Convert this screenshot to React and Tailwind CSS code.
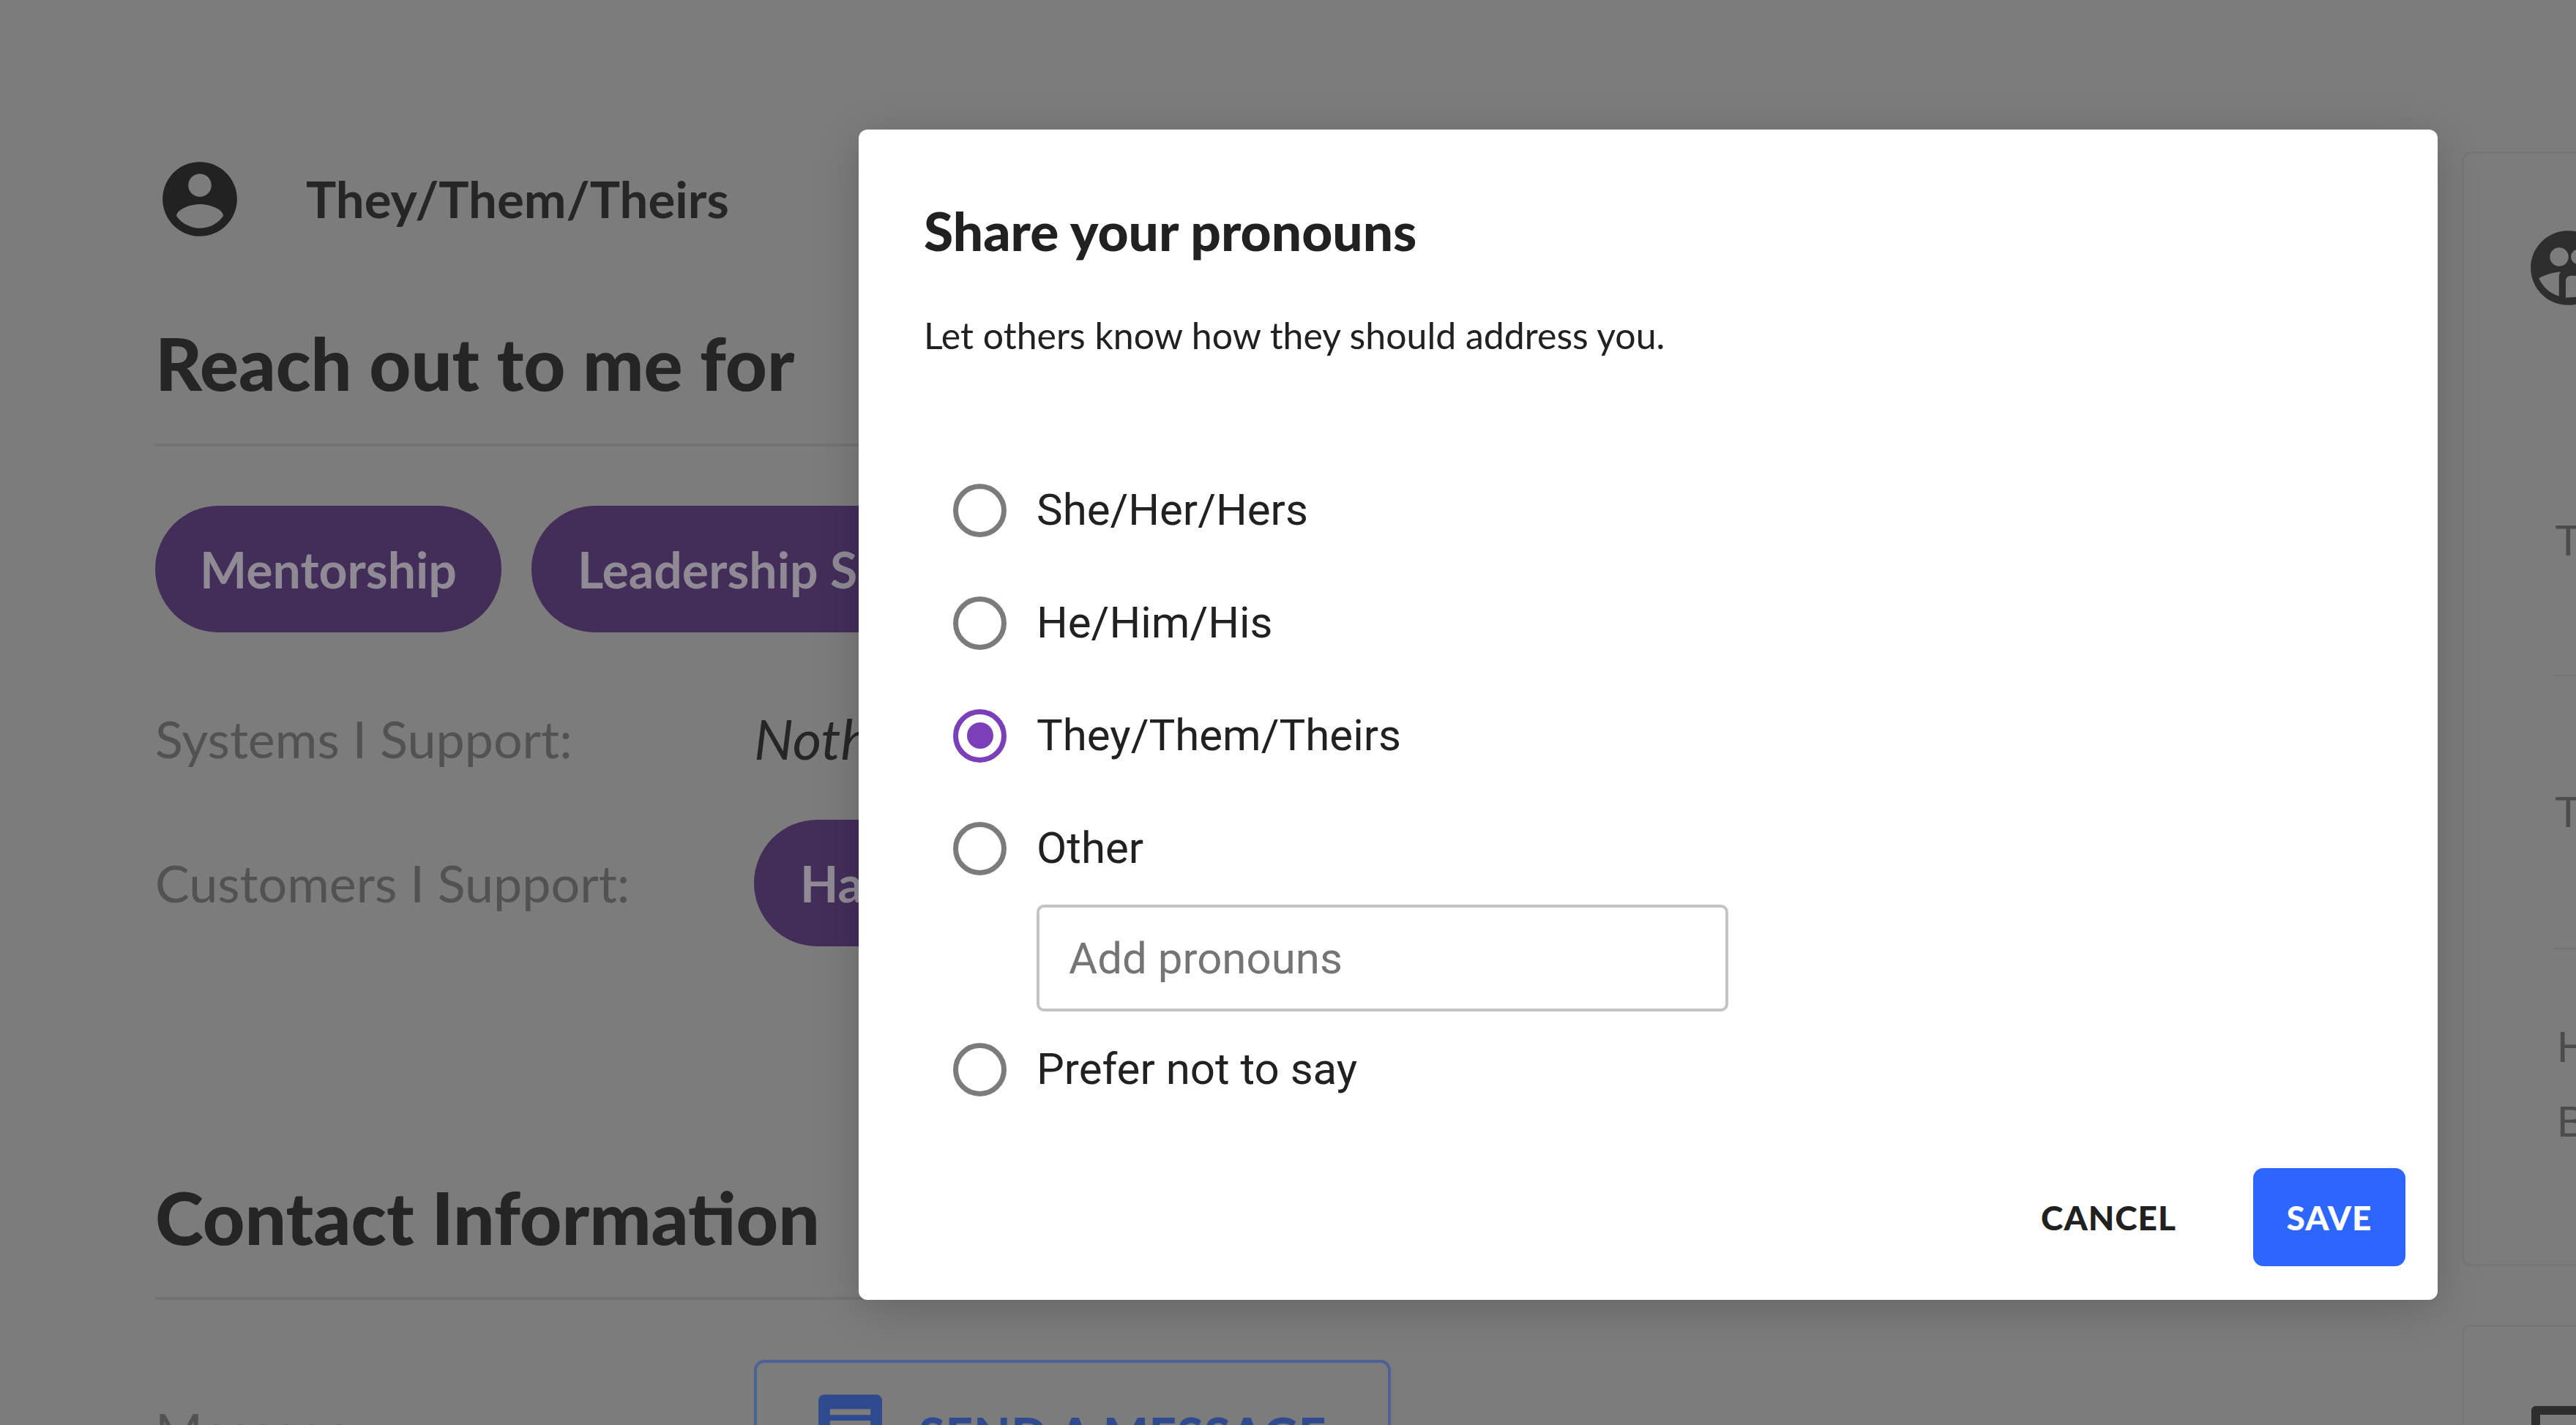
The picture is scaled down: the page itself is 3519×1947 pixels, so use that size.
import { useState } from "react";

const SANS = "font-['Lato','Noto_Sans',sans-serif]";
const ROBOTO = "font-['Roboto',sans-serif]";

const OPTIONS = ["She/Her/Hers", "He/Him/His", "They/Them/Theirs", "Other", "Prefer not to say"];

function AccountIcon({ className }) {
  return (
    <svg viewBox="0 0 24 24" className={className} fill="currentColor">
      <path d="M12 2C6.48 2 2 6.48 2 12s4.48 10 10 10 10-4.48 10-10S17.52 2 12 2zm0 3.2a3.1 3.1 0 1 1 0 6.2 3.1 3.1 0 0 1 0-6.2zm0 14.6c-2.6 0-4.9-1.3-6.3-3.3.1-2 4.2-3.1 6.3-3.1s6.2 1.1 6.3 3.1c-1.4 2-3.7 3.3-6.3 3.3z" />
    </svg>
  );
}

function ContactIcon({ className }) {
  return (
    <svg viewBox="0 0 24 24" className={className} fill="currentColor" fillRule="evenodd">
      <path d="M12 2C6.48 2 2 6.48 2 12s4.48 10 10 10 10-4.48 10-10S17.52 2 12 2zM9.650 6.550a2.500 2.500 0 1 1 0 5 2.500 2.500 0 0 1 0-5zM14.800 7a2 2 0 1 1 0 4 2 2 0 0 1 0-4zM4.200 14.800C5.800 13.900 8 13.200 10 13.100c-.3.500-.4.900-.4 1.500v5C7.200 18.900 5.200 17.100 4.200 14.800zM11.400 15.500c0-.8.600-1.400 1.400-1.400h7c.5 0 1 .5 1 1-.9 2.900-4.500 4.900-9.400 4.900z" />
    </svg>
  );
}

function Radio({ checked }) {
  return (
    <span
      className={`flex h-[73px] w-[73px] shrink-0 items-center justify-center rounded-full border-[7px] ${
        checked ? "border-[#7a3fb9]" : "border-[#7b7b7b]"
      }`}
    >
      {checked && <span className="h-[36px] w-[36px] rounded-full bg-[#7a3fb9]" />}
    </span>
  );
}

function Pill({ children, className = "" }) {
  return (
    <span
      className={`flex h-[173px] shrink-0 items-center rounded-[87px] bg-[#432e5a] text-[68px] font-bold whitespace-nowrap text-[#8f8a94] ${className}`}
    >
      {children}
    </span>
  );
}

function PronounDialog() {
  const [choice, setChoice] = useState("They/Them/Theirs");

  return (
    <div className={`absolute top-[177px] left-[1173px] flex h-[1599px] w-[2157px] flex-col rounded-[12px] bg-white shadow-[0_12px_60px_rgba(0,0,0,0.18)] ${SANS}`}>
      <div className="px-[89px] pt-[94px]">
        <h2 className="text-[73px] leading-[88px] font-black text-[#212121]">Share your pronouns</h2>
        <p className="mt-[64px] text-[50px] leading-[70px] text-[#212121]">Let others know how they should address you.</p>
      </div>

      <div className="mt-[127px] pl-[129px]">
        {OPTIONS.map((o) => (
          <div key={o}>
            <label onClick={() => setChoice(o)} className="flex h-[154px] cursor-pointer items-center gap-[41px]">
              <Radio checked={choice === o} />
              <span className={`text-[60px] text-[#212121] ${ROBOTO}`}>{o}</span>
            </label>
            {o === "Other" && (
              <input
                placeholder="Add pronouns"
                className={`mb-[2px] ml-[114px] block h-[146px] w-[945px] rounded-[10px] border-[4px] border-[#c4c4c4] px-[40px] text-[60px] outline-none placeholder:text-[#757575] ${ROBOTO}`}
              />
            )}
          </div>
        ))}
      </div>

      <div className="mt-auto flex items-center justify-end gap-[105px] pr-[44px] pb-[46px]">
        <button className="text-[46px] font-black tracking-[1px] text-[#212121]">CANCEL</button>
        <button className="h-[134px] w-[208px] rounded-[14px] bg-[#2d65ff] text-[46px] font-black tracking-[1px] text-white">SAVE</button>
      </div>
    </div>
  );
}

export default function App() {
  return (
    <div className={`relative h-[1947px] w-[3519px] overflow-hidden bg-[#7c7c7c] ${SANS}`}>
      <div className="flex">
        {/* profile column, mostly under the dialog */}
        <div className="w-[3363px] shrink-0 pt-[221px] pl-[212px]">
          <div className="flex h-[102px] items-center pl-[10px]">
            <AccountIcon className="h-[122px] w-[122px] shrink-0 -translate-x-[10px] text-[#222222]" />
            <span className="ml-[74px] text-[69px] font-bold text-[#262626]">They/Them/Theirs</span>
          </div>

          <h1 className="mt-[115px] text-[99px] leading-[116px] font-black text-[#252525]">Reach out to me for</h1>
          <div className="mt-[52px] mr-[200px] h-[4px] bg-[#727272]" />

          <div className="mt-[81px] flex gap-[41px]">
            <Pill className="px-[61px]">Mentorship</Pill>
            <Pill className="px-[63px]">Leadership Support</Pill>
          </div>

          <div className="mt-[88px] flex items-center text-[70px] text-[#525252]">
            <span className="w-[818px]">Systems I Support:</span>
            <span className="text-[76px] text-[#262626] italic">Nothing yet</span>
          </div>

          <div className="mt-[54px] flex items-center text-[70px] text-[#525252]">
            <span className="w-[818px]">Customers I Support:</span>
            <Pill className="px-[63px]">Hardware</Pill>
          </div>

          <h1 className="mt-[311px] text-[100px] leading-[116px] font-black text-[#252525]">Contact Information</h1>
          <div className="mt-[52px] mr-[200px] h-[4px] bg-[#727272]" />

          <div className="mt-[82px] flex items-start text-[70px] text-[#525252]">
            <span className="mt-[45px] w-[818px]">Message:</span>
            <span className="flex h-[170px] w-[870px] items-start gap-[50px] rounded-[14px] border-[4px] border-[#4f6296] pt-[40px] pl-[84px] text-[65px] font-black tracking-[1px] text-[#2f4a8e]">
              <svg viewBox="0 0 22 20" className="mt-[3px] h-[80px] w-[87px] shrink-0" fill="currentColor">
                <path d="M2 0h18a2 2 0 0 1 2 2v13a2 2 0 0 1-2 2H4l-4 4V2a2 2 0 0 1 2-2zm2 5v2h14V5H4zm0 4v2h14V9H4z" fillRule="evenodd" />
              </svg>
              <span className="mt-[9px] whitespace-nowrap">SEND A MESSAGE</span>
            </span>
          </div>
        </div>

        {/* side cards, cut off by the window edge */}
        <div className="w-[400px] shrink-0 pt-[207px]">
          <div className="h-[1523px] rounded-[12px] border-[3px] border-[#767676] pt-[95px] pl-[122px]">
            <ContactIcon className="-ml-[41px] h-[122px] w-[122px] text-[#2e2e2e]" />
            <div className="mt-[282px] border-b-[2px] border-[#727272] pb-[153px] pl-[2px] font-['Liberation_Sans',sans-serif] text-[60px] leading-[60px] whitespace-nowrap text-[#4c4c4c]">Time zone</div>
            <div className="mt-[156px] border-b-[2px] border-[#727272] pb-[155px] pl-[2px] font-['Liberation_Sans',sans-serif] text-[60px] leading-[60px] whitespace-nowrap text-[#4c4c4c]">Title</div>
            <div className="mt-[83px] pl-[5px] font-['Liberation_Sans',sans-serif] text-[60px] leading-[102px] whitespace-nowrap text-[#4c4c4c]">
              Hours
              <br />
              Base
            </div>
          </div>
          <div className="mt-[80px] h-[300px] rounded-[12px] border-[3px] border-[#767676] pt-[108px] pl-[92px]">
            <span className="block h-[90px] w-[90px] rounded-[6px] border-[12px] border-[#2e2e2e]" />
          </div>
        </div>
      </div>

      <PronounDialog />
    </div>
  );
}
